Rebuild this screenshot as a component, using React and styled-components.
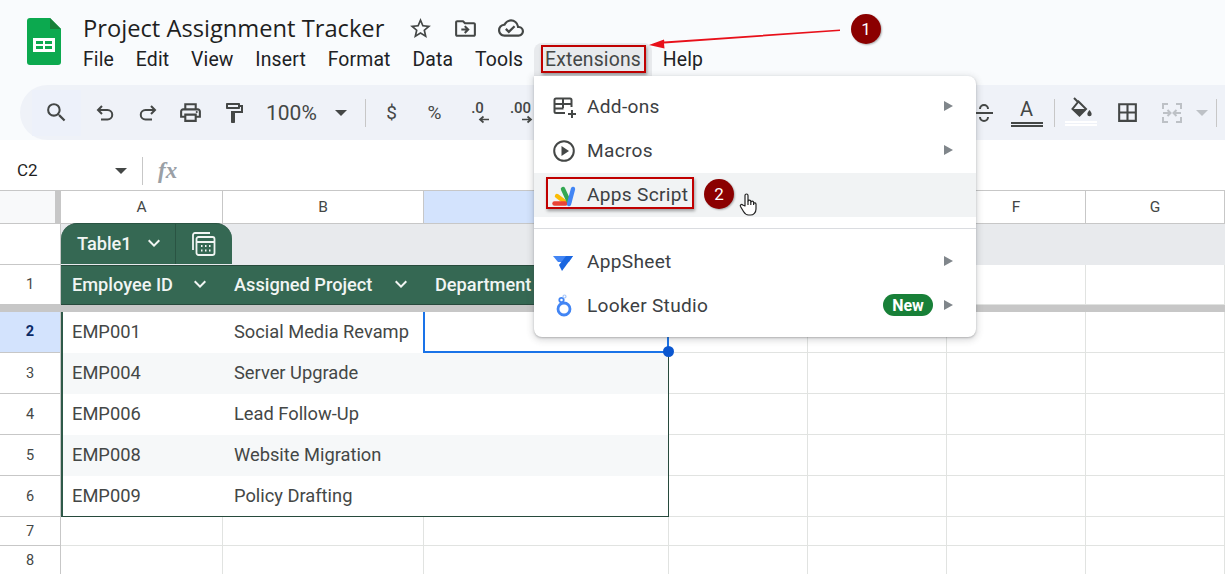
import React from "react";
import styled, { createGlobalStyle } from "styled-components";
import {
  MdSearch, MdOutlinePrint, MdOutlineFormatPaint, MdStarBorder,
  MdOutlineDriveFileMove, MdOutlineCloudDone,
  MdBorderAll, MdKeyboardArrowDown,
} from "react-icons/md";

const Global = createGlobalStyle`
  html, body { margin: 0; padding: 0; background: #fff; }
  * { box-sizing: border-box; }
`;

const COLS = "61px 162px 201px 245px 139px 139px 139px 139px";
const UI = `Roboto, "Liberation Sans", sans-serif`;

const Page = styled.div`
  position: relative; width: 1225px; height: 574px; overflow: hidden;
  background: #fff; font-family: ${UI}; color: #444746;
`;
const Top = styled.div`background: #f9fbfd;`;
const Header = styled.header`display: flex; height: 85px; padding: 13px 0 0 27px;`;
const Logo = styled.svg`width: 34px; height: 47px; margin-top: 5px; flex: none;`;
const TitleBlock = styled.div`margin-left: 22px; display: flex; flex-direction: column;`;
const TitleRow = styled.div`display: flex; align-items: center; height: 30px; color: #444746;`;
const DocName = styled.div`
  font-family: "Open Sans", ${UI}; font-size: 23.7px; color: #1f1f1f; width: 315px; white-space: nowrap;
`;
const TitleIcon = styled.span`display: flex; width: 45px; justify-content: center;`;
const MenuBar = styled.nav`display: flex; height: 33px; margin-left: -10.9px;`;
const MenuEntry = styled.div`
  position: relative; display: flex; align-items: center; padding: 0 10.9px;
  font-size: 19.4px; letter-spacing: .15px; color: #202124;
  ${p => p.$open && `background: #e8eaed; color: #444746; border-radius: 8px 8px 0 0;`}
`;
const Callout = styled.div`
  position: absolute; border: 2.5px solid #c00000; box-shadow: 1px 2px 3px rgba(0,0,0,.35);
  left: ${p => p.$l}px; top: ${p => p.$t}px; width: ${p => p.$w}px; height: ${p => p.$h}px;
`;
const Toolbar = styled.div`
  display: flex; align-items: center; height: 55px; margin: 0 0 11px 20px; padding-left: 12px;
  background: #eff2f8; border-radius: 28px 0 0 28px; color: #444746;
`;
const SearchTool = styled.div`
  display: flex; align-items: center; justify-content: center; width: 49px; height: 46px;
  margin-right: 2px; background: #edf1fa; color: #444746;
`;
const Tool = styled.div`
  display: flex; align-items: center; justify-content: center; flex: none;
  width: ${p => p.$w || 43}px; height: 34px; font-size: ${p => p.$fs || 19}px; color: ${p => p.$c || "#444746"};
`;
const ZoomValue = styled.div`width: 80px; text-align: left; padding-left: 11px; font-size: 21px; flex: none;`;
const Caret = styled.span`
  display: inline-block; border-left: 6px solid transparent; border-right: 6px solid transparent;
  border-top: 6px solid ${p => p.$c || "#444746"};
`;
const Sep = styled.div`width: 1px; height: 28px; background: #c7c7c7; flex: none;`;
const DecimalBox = styled.div`display: flex; flex-direction: column; align-items: center; line-height: 1; font-weight: 500; font-size: 15px; width: 100%;`;
const DecimalArrow = styled.svg`width: 12px; height: 9px; margin: -1px 0 0 12px;`;
const Spacer = styled.div`flex: 0 0 ${p => p.$w}px;`;
const ColorA = styled.div`display: flex; flex-direction: column; align-items: center; font-size: 20px; line-height: 20px;`;
const DoubleLine = styled.div`width: 32px; height: 5px; border-top: 2px solid #444746; border-bottom: 2px solid #444746; margin-top: 3px;`;
const FillWrap = styled.div`display: flex; flex-direction: column; align-items: center; width: 32px; margin-top: -3px;`;
const FillLine = styled.div`width: 32px; height: 5px; border-top: 2px solid #fff; border-bottom: 2px solid #fff; margin-top: 2px;`;

const FormulaBar = styled.div`display: flex; align-items: center; height: 39px; background: #fff; padding-left: 17px;`;
const NameBox = styled.div`width: 98px; padding-bottom: 2px; font-size: 17px; color: #1f1f1f;`;
const Fx = styled.div`
  font-family: "Liberation Serif", serif; font-style: italic; font-weight: 700; font-size: 23px; color: #9aa0a6; margin-left: 15px;
`;

const Row = styled.div`display: grid; grid-template-columns: ${COLS}; height: ${p => p.$h}px;`;
const Corner = styled.div`
  background: #f8f9fa; border-top: 1px solid #c7c7c7; border-bottom: 1px solid #c7c7c7;
  border-right: 6px solid #c7c7c7;
`;
const ColHead = styled.div`
  display: flex; align-items: center; justify-content: center; font-size: 15.5px; color: #444746;
  border-top: 1px solid #c7c7c7; border-bottom: 1px solid #c7c7c7; border-right: 1px solid #c7c7c7;
  background: ${p => (p.$sel ? "#d3e3fd" : "#fff")};
`;
const RowHead = styled.div`
  display: flex; align-items: center; justify-content: center; font-size: 14.5px;
  border-right: 1px solid #c7c7c7; border-bottom: 1px solid #c7c7c7;
  ${p => p.$sel ? `background: #d3e3fd; color: #0b2a66; font-weight: 700; padding-bottom: 2px;` : `background: #fff; color: #444746;`}
`;
const Cell = styled.div`border-right: 1px solid #e1e3e1; border-bottom: 1px solid #e1e3e1; background: #fff;`;
const Band = styled.div`grid-column: 2 / -1; background: #e8eaed; display: flex;`;
const TableTab = styled.div`
  display: flex; width: 171px; height: 41px; margin-top: -1px; background: #356853; color: #fff;
  border-radius: 16px 16px 0 0; border-top: 1px solid #2a5443;
`;
const TabName = styled.div`
  display: flex; align-items: center; width: 115px; padding: 0 0 2px 16px; font-size: 18.2px; font-weight: 500;
  border-right: 1px solid #2a5443; color: #f1f5f3;
`;
const TabChevron = styled.span`display: flex; margin-left: 10px;`;
const TabIcon = styled.div`flex: 1; display: flex; align-items: center; justify-content: center; padding-right: 2px;`;
const HeadCell = styled.div`
  display: flex; align-items: center; padding: 0 0 2px 11px; font-size: 18.2px; font-weight: 500; white-space: nowrap;
  background: #356853; color: #f1f5f3; border-top: 1px solid #274a3c; border-bottom: 1px solid #274a3c;
`;
const HeadChevron = styled.span`display: flex; margin-left: auto; margin-right: ${p => p.$r}px;`;
const Freeze = styled.div`height: 7px; background: #c7c7c7;`;
const TableCell = styled.div`
  position: relative; display: flex; align-items: center; padding: 0 0 2px 11px; font-size: 18.3px; color: #444746; white-space: nowrap;
  background: ${p => (p.$band ? "#f6f8f9" : "#fff")};
  ${p => p.$first && `border-left: 2px solid #2f5a49; padding-left: 9px;`}
  ${p => p.$last && `border-right: 1px solid #274a3c;`}
  ${p => p.$end && `border-bottom: 1px solid #274a3c;`}
  ${p => p.$selected && `border-left: 2px solid #1a73e8; border-right: 2px solid #1a73e8; border-bottom: 2px solid #1a73e8; z-index: 1; margin-left: -1px;`}
`;
const Handle = styled.span`
  position: absolute; right: -7px; bottom: -6px; width: 11px; height: 11px; border-radius: 50%; background: #0b57d0;
`;

const Menu = styled.div`
  position: absolute; left: 534px; top: 76px; width: 442px; height: 261px; padding-top: 9px; z-index: 3;
  background: #fff; border-radius: 0 8px 8px 8px; box-shadow: 0 2px 6px 2px rgba(60,64,67,.16), 0 1px 2px rgba(60,64,67,.3);
`;
const Item = styled.div`
  position: relative; display: flex; align-items: center; height: 44px; padding: 0 23px 2px 18px;
  font-size: 19.1px; letter-spacing: .3px; color: #3c4043;
  ${p => p.$active && `background: #f1f3f4;`}
`;
const ItemIcon = styled.svg`width: 24px; height: 24px; margin: 2px 11px 0 0; flex: none;`;
const Chevron = styled.span`
  margin-left: ${p => (p.$after ? "11px" : "auto")}; border-left: 9px solid #80868b; border-top: 5px solid transparent; border-bottom: 5px solid transparent;
`;
const NewPill = styled.span`
  margin-left: auto; display: flex; align-items: center; justify-content: center; width: 50px; height: 22px; border-radius: 11px;
  background: #188038; color: #fff; font-weight: 700; font-size: 16px; letter-spacing: 0;
`;
const Divider = styled.div`height: 1px; background: #dadce0; margin: 11px 0 11px;`;
const StepBadge = styled.span`
  position: absolute; display: flex; align-items: center; justify-content: center;
  width: 30px; height: 30px; border-radius: 50%; background: #8b0000; color: #fff; font-size: 17px; letter-spacing: 0;
  box-shadow: 1px 1px 2px rgba(0,0,0,.3); z-index: 4;
  left: ${p => p.$l}px; top: ${p => p.$t}px;
`;
const Hand = styled.svg`position: absolute; left: 205px; top: 19px; width: 18px; height: 24px;`;
const ArrowLayer = styled.svg`position: absolute; left: 640px; top: 20px; width: 210px; height: 35px; z-index: 4;`;

const Dec = ({ label, left }) => (
  <Tool>
    <DecimalBox>
      {label}
      <DecimalArrow viewBox="0 0 12 9">
        <path d={left ? "M11 4.500H3M5.500 1.500 2 4.500l3.500 3" : "M1 4.500h8M6.500 1.500 10 4.500l-3.500 3"} fill="none" stroke="#444746" strokeWidth="1.700" />
      </DecimalArrow>
    </DecimalBox>
  </Tool>
);

const Turn = ({ flip }) => (
  <svg width="24" height="24" viewBox="0 0 24 24" fill="none" stroke="#444746" strokeWidth="2" style={flip ? { transform: "scaleX(-1)" } : undefined}>
    <path d="M9 5 5 9l4 4M5 9h9.500a4.750 4.750 0 0 1 0 9.500H8" />
  </svg>
);

const Chev = ({ s = 24 }) => <MdKeyboardArrowDown size={s} color="#f1f5f3" />;

const body = [
  ["EMP004", "Server Upgrade", true, 3],
  ["EMP006", "Lead Follow-Up", false, 4],
  ["EMP008", "Website Migration", true, 5],
  ["EMP009", "Policy Drafting", false, 6],
];

const Rest = () => (<><Cell /><Cell /><Cell /><Cell /></>);

export default function App() {
  return (
    <Page>
      <Global />
      <Top>
        <Header>
          <Logo viewBox="0 0 34 47">
            <path d="M3 0h20l11 11v33a3 3 0 0 1-3 3H3a3 3 0 0 1-3-3V3a3 3 0 0 1 3-3z" fill="#0ca94f" />
            <path d="M23 0l11 11H23z" fill="#188038" />
            <path d="M6 20h22v14H6z" fill="#fff" />
            <path d="M9 23h7v3H9zM18 23h7v3h-7zM9 28h7v3H9zM18 28h7v3h-7z" fill="#0ca94f" />
          </Logo>
          <TitleBlock>
            <TitleRow>
              <DocName>Project Assignment Tracker</DocName>
              <TitleIcon><MdStarBorder size={25} /></TitleIcon>
              <TitleIcon><MdOutlineDriveFileMove size={25} /></TitleIcon>
              <TitleIcon><MdOutlineCloudDone size={26} /></TitleIcon>
            </TitleRow>
            <MenuBar>
              <MenuEntry>File</MenuEntry>
              <MenuEntry>Edit</MenuEntry>
              <MenuEntry>View</MenuEntry>
              <MenuEntry>Insert</MenuEntry>
              <MenuEntry>Format</MenuEntry>
              <MenuEntry>Data</MenuEntry>
              <MenuEntry>Tools</MenuEntry>
              <MenuEntry $open>Extensions<Callout $l={7} $t={2} $w={105} $h={28} /></MenuEntry>
              <MenuEntry>Help</MenuEntry>
            </MenuBar>
          </TitleBlock>
        </Header>
        <Toolbar>
          <SearchTool><MdSearch size={25} /></SearchTool>
          <Tool><Turn /></Tool>
          <Tool><Turn flip /></Tool>
          <Tool><MdOutlinePrint size={25} /></Tool>
          <Tool><MdOutlineFormatPaint size={24} /></Tool>
          <ZoomValue>100%</ZoomValue>
          <Caret />
          <Spacer $w={18} />
          <Sep />
          <Spacer $w={4} />
          <Tool>$</Tool>
          <Tool>%</Tool>
          <Dec label=".0" left />
          <Dec label=".00" />
          <Spacer $w={420} />
          <Tool>
            <svg width="24" height="24" viewBox="0 0 24 24" fill="none" stroke="#444746" strokeWidth="2">
              <path d="M3 12h18M16 8a4 4 0 0 0-8 0M8 16a4 4 0 0 0 8 0" />
            </svg>
          </Tool>
          <Tool><ColorA>A<DoubleLine /></ColorA></Tool>
          <Spacer $w={6} />
          <Sep />
          <Spacer $w={4} />
          <Tool>
            <FillWrap>
              <svg width="24" height="22" viewBox="0 0 24 22" fill="none">
                <path d="M5 1l4 4M9.500 4.500 17 12l-6.500 6.500L3.500 12z" stroke="#444746" strokeWidth="2" />
                <path d="M3.500 12h13.500l-6.500 6.500z" fill="#444746" />
                <path d="M20.500 13s-2.200 2.500-2.200 4a2.200 2.200 0 0 0 4.400 0c0-1.500-2.200-4-2.200-4z" fill="#444746" />
              </svg>
              <FillLine />
            </FillWrap>
          </Tool>
          <Tool $w={50}><MdBorderAll size={25} /></Tool>
          <Tool $w={40}>
            <svg width="24" height="24" viewBox="0 0 24 24" fill="none" stroke="#bdc1c6" strokeWidth="2">
              <path d="M8 3H3v5M8 21H3v-5M16 3h5v5M16 21h5v-5M3 12h7M7.500 9l3 3-3 3M21 12h-7M16.500 9l-3 3 3 3" />
            </svg>
          </Tool>
          <Spacer $w={4} />
          <Caret $c="#bdc1c6" />
          <Spacer $w={8} />
          <Sep />
        </Toolbar>
      </Top>
      <FormulaBar>
        <NameBox>C2</NameBox>
        <Caret />
        <Spacer $w={15} />
        <Sep />
        <Fx>fx</Fx>
      </FormulaBar>

      <Row $h={34}>
        <Corner />
        <ColHead>A</ColHead>
        <ColHead>B</ColHead>
        <ColHead $sel>C</ColHead>
        <ColHead>D</ColHead>
        <ColHead>E</ColHead>
        <ColHead>F</ColHead>
        <ColHead>G</ColHead>
      </Row>
      <Row $h={41}>
        <RowHead />
        <Band>
          <TableTab>
            <TabName>Table1<TabChevron><Chev /></TabChevron></TabName>
            <TabIcon>
              <svg width="25" height="24" viewBox="0 0 25 24" fill="none" stroke="#f1f5f3" strokeWidth="1.800">
                <path d="M2 18V3a2 2 0 0 1 2-2h15" />
                <rect x="5.500" y="5" width="18" height="18" rx="2" />
                <path d="M5.500 10h18M10 14h1.500M14 14h1.500M18 14h1.500M10 18.500h1.500M14 18.500h1.500M18 18.500h1.500" />
              </svg>
            </TabIcon>
          </TableTab>
        </Band>
      </Row>
      <Row $h={40}>
        <RowHead>1</RowHead>
        <HeadCell>Employee ID<HeadChevron $r={11}><Chev /></HeadChevron></HeadCell>
        <HeadCell>Assigned Project<HeadChevron $r={11}><Chev /></HeadChevron></HeadCell>
        <HeadCell>Department</HeadCell>
        <Rest />
      </Row>
      <Freeze />
      <Row $h={41}>
        <RowHead $sel>2</RowHead>
        <TableCell $first>EMP001</TableCell>
        <TableCell>Social Media Revamp</TableCell>
        <TableCell $selected><Handle /></TableCell>
        <Rest />
      </Row>
      {body.map(([id, project, band, n]) => (
        <Row $h={41} key={id}>
          <RowHead>{n}</RowHead>
          <TableCell $first $band={band} $end={n === 6}>{id}</TableCell>
          <TableCell $band={band} $end={n === 6}>{project}</TableCell>
          <TableCell $band={band} $last $end={n === 6} />
          <Rest />
        </Row>
      ))}
      <Row $h={29}>
        <RowHead>7</RowHead><Cell /><Cell /><Cell /><Rest />
      </Row>
      <Row $h={29}>
        <RowHead>8</RowHead><Cell /><Cell /><Cell /><Rest />
      </Row>

      <Menu>
        <Item>
          <ItemIcon viewBox="0 0 24 24" fill="none" stroke="#444746" strokeWidth="2">
            <path d="M13 18H4a1.500 1.500 0 0 1-1.500-1.500V5A1.500 1.500 0 0 1 4 3.500h14A1.500 1.500 0 0 1 19.500 5v7M2.500 9h17M2.500 13.500h9M11 3.500V13M20 15v8M16 19h8" />
          </ItemIcon>
          Add-ons<Chevron />
        </Item>
        <Item>
          <ItemIcon viewBox="0 0 24 24">
            <circle cx="12" cy="12" r="9.800" fill="none" stroke="#444746" strokeWidth="2" />
            <path d="M9.500 7l7.500 5-7.500 5z" fill="#444746" />
          </ItemIcon>
          Macros<Chevron />
        </Item>
        <Item $active>
          <ItemIcon viewBox="0 0 24 24" fill="none" strokeLinecap="round" strokeWidth="4.400">
            <path d="M5 13 13 19" stroke="#fbbc04" />
            <path d="M2.500 20.500h11" stroke="#ea4335" />
            <path d="M11 6l6 13" stroke="#34a853" />
            <path d="M21 6l-4 15" stroke="#4285f4" />
          </ItemIcon>
          Apps Script
          <Callout $l={12} $t={4} $w={148} $h={32} />
          <StepBadge $l={170} $t={6}>2</StepBadge>
          <Hand viewBox="0 0 18 24" fill="#fff" stroke="#222" strokeWidth="1.200" strokeLinejoin="round">
            <path d="M6 14V3.500a1.500 1.500 0 0 1 3 0V9.500a1.400 1.400 0 0 1 2.800 0v1a1.400 1.400 0 0 1 2.800 0v1a1.300 1.300 0 0 1 2.400.500V17c0 3.500-2.500 6-5.500 6h-2c-2.500 0-3.800-1.500-5-3.500L1.500 14.500c-.8-1.500 1-2.700 2.200-1.500z" />
            <path d="M9 9.500V13M11.800 10.500V13M14.600 11.500V13" fill="none" />
          </Hand>
        </Item>
        <Divider />
        <Item>
          <ItemIcon viewBox="0 0 24 24">
            <path d="M1 6h20l-4 6H6z" fill="#4285f4" />
            <path d="M14 6h7L10 21l-3-6z" fill="#1a66e0" />
          </ItemIcon>
          AppSheet<Chevron />
        </Item>
        <Item>
          <ItemIcon viewBox="0 0 24 24" fill="none">
            <circle cx="12" cy="15" r="6" stroke="#4285f4" strokeWidth="2.800" />
            <circle cx="9.500" cy="6" r="2.200" stroke="#4285f4" strokeWidth="1.800" />
            <circle cx="12.500" cy="2.500" r="1.500" stroke="#a8c7fa" strokeWidth="1.200" />
          </ItemIcon>
          Looker Studio<NewPill>New</NewPill><Chevron $after />
        </Item>
      </Menu>

      <ArrowLayer viewBox="640 20 210 35">
        <path d="M840 29.500 L840 31 L664 43.500 L664.500 48.500 L649 45 L664 39.500 L664.300 41.500 Z" fill="#e8101a" />
      </ArrowLayer>
      <StepBadge $l={851} $t={14}>1</StepBadge>
    </Page>
  );
}
